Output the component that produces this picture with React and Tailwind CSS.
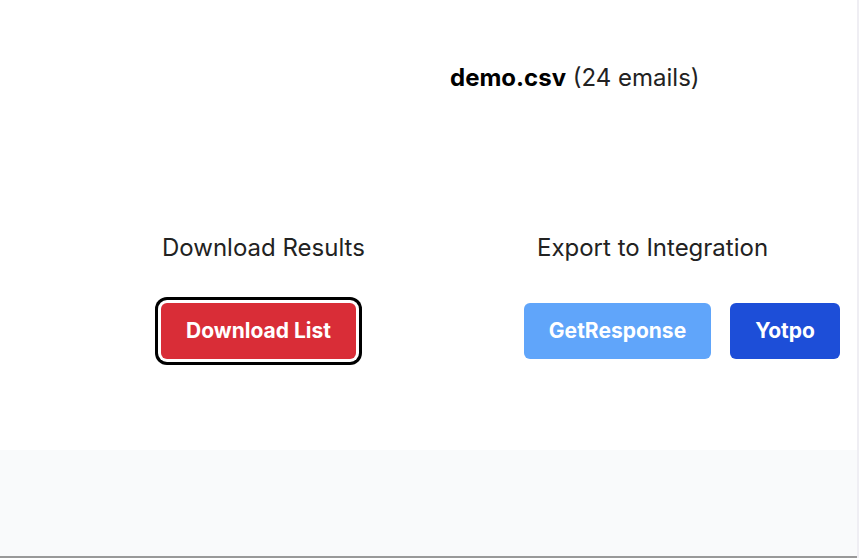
export default function App() {
  return (
    <div
      className="w-[859px] h-[558px] flex flex-col bg-white overflow-hidden border-r-2 border-[#efeef3]"
      style={{ fontFamily: 'Inter, "Noto Sans", sans-serif' }}
    >
      <div className="h-[450px] flex flex-col">
        <p className="mt-[62px] ml-[450px] text-2xl leading-8 text-[#222]">
          <span className="font-bold text-black">demo.csv</span> (24 emails)
        </p>
        <div className="mt-[138px] flex">
          <div className="ml-[155px] w-[240px] flex flex-col items-start">
            <h2 className="ml-[7px] text-2xl leading-8 text-[#222]">Download Results</h2>
            <button className="mt-[39px] ml-[6px] h-[56px] w-[195px] rounded-md bg-[#d92d37] text-white font-bold text-[21px] ring-[3px] ring-black ring-offset-[3px] ring-offset-white">
              Download List
            </button>
          </div>
          <div className="ml-[129px] flex flex-col">
            <h2 className="ml-[13px] text-2xl leading-8 text-[#222]">Export to Integration</h2>
            <div className="mt-[39px] flex gap-[19px]">
              <button className="h-[56px] w-[187px] rounded-md bg-[#60a5fa] text-white font-bold text-[21px]">
                GetResponse
              </button>
              <button className="h-[56px] w-[110px] rounded-md bg-[#1d4ed8] text-white font-bold text-[21px]">
                Yotpo
              </button>
            </div>
          </div>
        </div>
      </div>
      <div className="flex-1 bg-[#f9fafb] border-b-2 border-[#999]" />
    </div>
  );
}
